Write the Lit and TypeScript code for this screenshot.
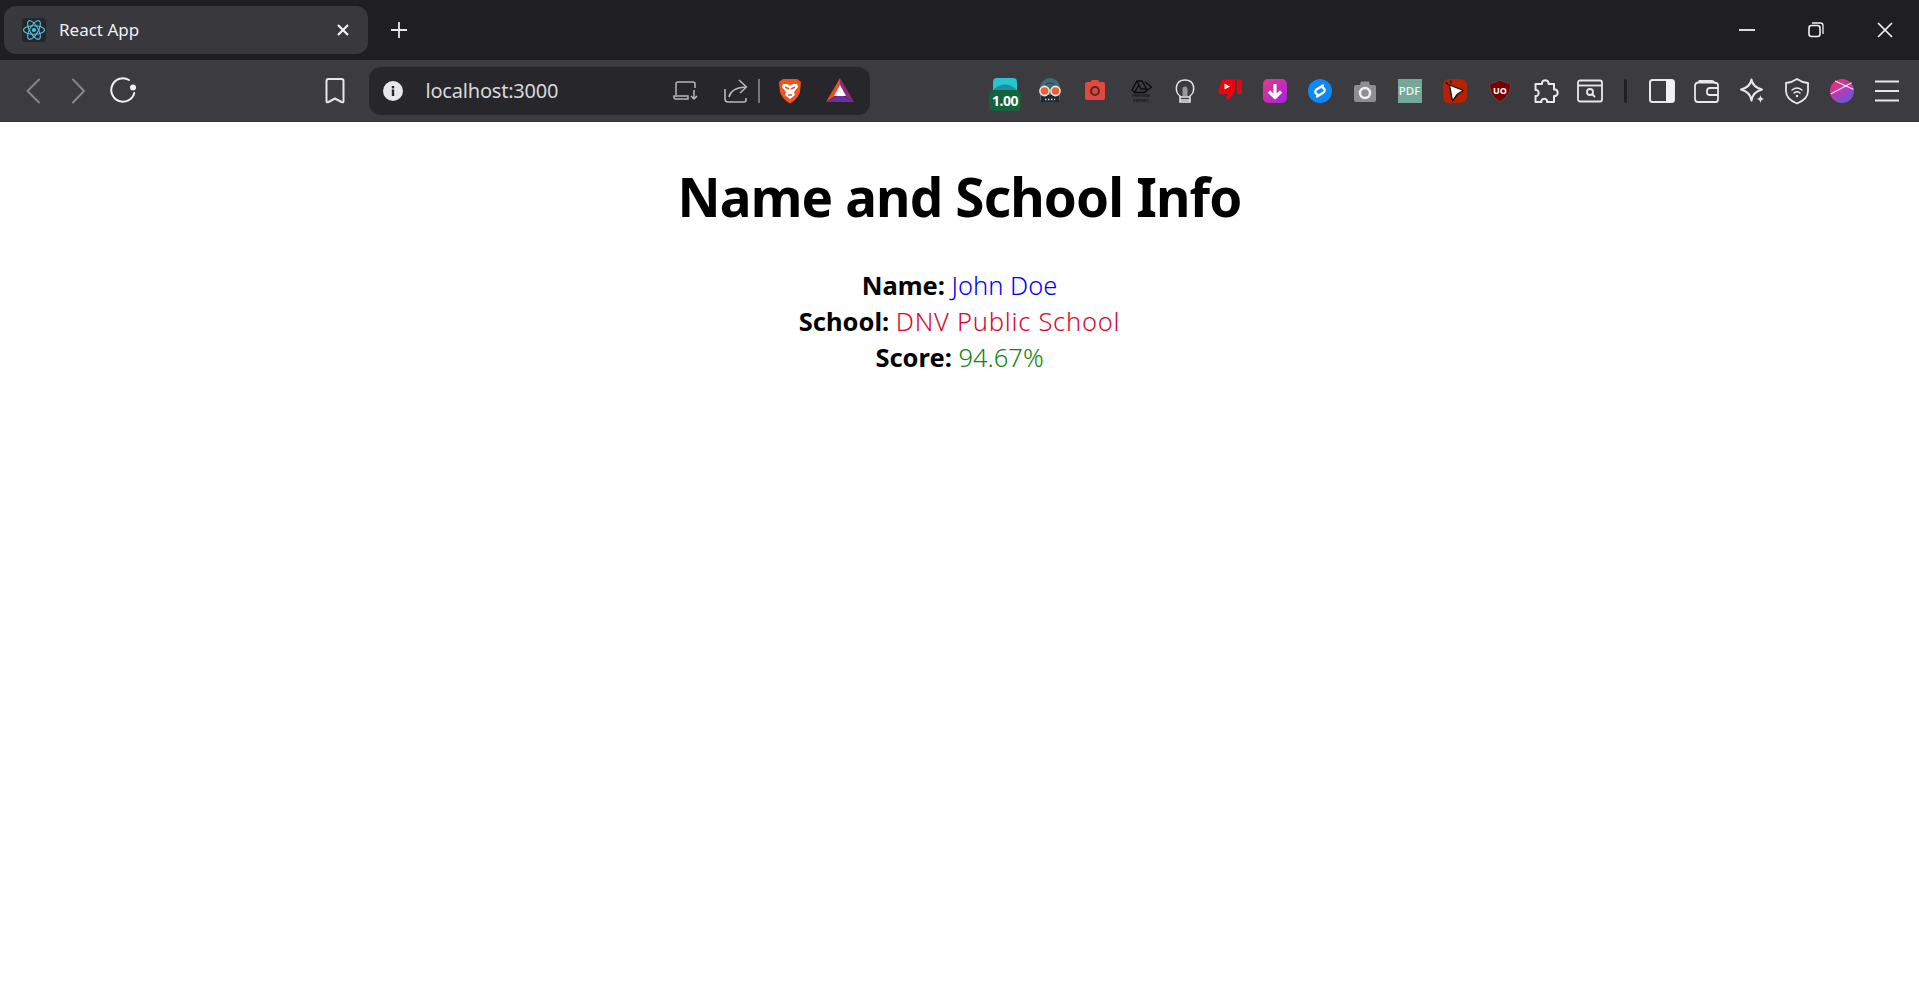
import { LitElement, html, css, svg } from 'lit';
import { customElement } from 'lit/decorators.js';

// toolbar icons, all drawn in a 30x30 box
const icon = (body: unknown) => html`<svg width="30" height="30" viewBox="0 0 30 30">${body}</svg>`;

const reactLogo = html`<svg class="favicon" width="24" height="24" viewBox="0 0 24 24">
  <rect width="24" height="24" rx="3" fill="#23272b"></rect>
  <g fill="none" stroke="#53c1de" stroke-width="1.1">
    <ellipse cx="12" cy="12" rx="10.5" ry="4.2"></ellipse>
    <ellipse cx="12" cy="12" rx="10.5" ry="4.2" transform="rotate(60 12 12)"></ellipse>
    <ellipse cx="12" cy="12" rx="10.5" ry="4.2" transform="rotate(120 12 12)"></ellipse>
  </g>
  <circle cx="12" cy="12" r="2.1" fill="#53c1de"></circle>
</svg>`;

const navIcons = [
  icon(svg`<path d="M21 3.500 L9.500 15 L21 26.500" fill="none" stroke="#85858a" stroke-width="2" stroke-linecap="round" stroke-linejoin="round"/>`),
  icon(svg`<path d="M10 3.500 L21 15 L10 26.500" fill="none" stroke="#85858a" stroke-width="2" stroke-linecap="round" stroke-linejoin="round"/>`),
  icon(svg`<path d="M21 4 A11.700 11.700 0 1 0 26.300 17" fill="none" stroke="#f2f2f4" stroke-width="2" stroke-linecap="round"/><circle cx="25" cy="11.500" r="3" fill="#f2f2f4"/>`),
];

const bookmark = icon(svg`<path d="M6.500 5 Q6.500 3 8.500 3 H21.500 Q23.500 3 23.500 5 V25 Q23.500 27 21.500 26 L15 22.500 L8.500 26 Q6.500 27 6.500 25 Z" fill="none" stroke="#e8e8ea" stroke-width="2" stroke-linejoin="round"/>`);

const extensions = [
  html`<svg width="34" height="34" viewBox="0 0 34 34" class="tall">
    <rect x="5" y="0" width="24" height="20" rx="4" fill="#2ac4cf"></rect>
    <path d="M6 11 Q17 2 28 11 V16 H6 Z" fill="#1b8fa8"></path>
    <rect x="1" y="12" width="32" height="21" rx="5" fill="#14633a"></rect>
    <text x="17" y="28" text-anchor="middle" class="badge-text">1.00</text>
  </svg>`,
  icon(svg`<path d="M5 24 V12 A10 10 0 0 1 25 12 V24 Z" fill="#3f6b78"/><path d="M9 9 Q15 4 21 9 L15 7.500 Z" fill="#1f3a44"/><rect x="6" y="19" width="18" height="7" fill="#1f2a33"/>
    <circle cx="9.500" cy="15" r="4.600" fill="#e8603c" stroke="#f2e4d6" stroke-width="1.600"/><circle cx="20.500" cy="15" r="4.600" fill="#e8603c" stroke="#f2e4d6" stroke-width="1.600"/><path d="M10 23.500 H20" stroke="#c8d2d6" stroke-width="1.400" stroke-dasharray="1.500 1.500"/>`),
  icon(svg`<path d="M7 6 H10.500 L12 4 H18 L19.500 6 H23 Q25 6 25 8 V22 Q25 24 23 24 H7 Q5 24 5 22 V8 Q5 6 7 6 Z" fill="#e2483d"/><circle cx="15" cy="15" r="4" fill="none" stroke="#5a2a2a" stroke-width="2.200"/>`),
  icon(svg`<path d="M7 14 L12 5 H17 L22 14 L19.500 16.500 H9.500 Z M12 5 L16 13 H22 M9.500 16.500 L13.500 9.500" fill="none" stroke="#0c0c0e" stroke-width="1.300"/><path d="M20 6 L26.500 11 L20 16" fill="none" stroke="#0c0c0e" stroke-width="1.300"/>
    <text x="16" y="21" text-anchor="middle" class="tiny-text">PREVIEW</text><text x="16" y="26" text-anchor="middle" class="tiny-text">EXPORT</text>`),
  icon(svg`<path d="M10 20 C4.500 16 4.500 4 15 4 C25.500 4 25.500 16 20 20 V26 H10 Z" fill="none" stroke="#e8e8ea" stroke-width="1.500"/><path d="M12.500 20 V13 A2.500 2.500 0 0 1 17.500 13 V20 Z" fill="#98989c"/><path d="M10 21 H20 M10 24 H20" stroke="#e8e8ea" stroke-width="1.500"/>`),
  icon(svg`<path d="M7 3.500 H20 V15 L14 23.500 L11 23 L12 18 H5 Q3 18 3.500 15 Z" fill="#f2000d"/><path d="M9.500 7.500 L15 10.500 L9.500 13.500 Z" fill="#fff"/><rect x="22" y="3.500" width="4.700" height="14.500" fill="#f2000d"/>`),
  html`<svg width="24" height="24" viewBox="0 0 24 24">
    <defs><linearGradient id="dl" x1="0" y1="0" x2="1" y2="1"><stop offset="0" stop-color="#e23a8c"></stop><stop offset="1" stop-color="#a522e0"></stop></linearGradient></defs>
    <rect width="24" height="24" rx="5" fill="url(#dl)"></rect>
    <path d="M12 5 V18 M6 12.500 L12 18.500 L18 12.500" fill="none" stroke="#fff" stroke-width="3.200" stroke-linejoin="round"></path>
  </svg>`,
  html`<svg width="24" height="24" viewBox="0 0 24 24">
    <circle cx="12" cy="12" r="12" fill="#0d88f5"></circle>
    <path d="M15 6.500 L8.500 10.500 Q6 13 8.500 15 L10.500 16 M9 17.500 L15.500 13.500 Q18 11 15.500 9 L13.500 8" fill="none" stroke="#fff" stroke-width="2.300" stroke-linecap="round"></path>
  </svg>`,
  icon(svg`<path d="M4 11 Q4 9 6 9 H10 L11 5.500 H19 L20 9 H24 Q26 9 26 11 V24 Q26 26 24 26 H6 Q4 26 4 24 Z" fill="#8f8f93"/><circle cx="15" cy="17" r="5" fill="#8f8f93" stroke="#f0f0f2" stroke-width="2.500"/>`),
  html`<div class="pdf">PDF</div>`,
  html`<svg width="24" height="24" viewBox="0 0 24 24">
    <rect width="24" height="24" rx="6" fill="#b92200"></rect>
    <path d="M6.500 6 L20.500 11.500 L14.500 15 L9.500 22 Z" fill="#fff" stroke="#111" stroke-width="1.300" stroke-linejoin="round"></path>
    <path d="M3 3 L5.500 6 M7.500 1.500 L8 4.500" stroke="#111" stroke-width="1.300"></path>
  </svg>`,
  html`<svg width="24" height="24" viewBox="0 0 24 24">
    <path d="M12 1 Q17 4 22.500 4.500 Q23 16 12 23 Q1 16 1.500 4.500 Q7 4 12 1 Z" fill="#7a0000" stroke="#55555a" stroke-width="0.800"></path>
    <text x="12" y="15" text-anchor="middle" class="ubo-text">UO</text>
  </svg>`,
  icon(svg`<path d="M12 6.500 A3.500 3.500 0 0 1 18.500 6.500 V8 H24 V13.500 H25.500 A3.500 3.500 0 0 1 25.500 20 H24 V26 H17 V24.500 A3 3 0 0 0 11.500 24.500 V26 H5.500 V20 H7 A3.500 3.500 0 0 0 7 14 H5.500 V8 H12 Z" fill="none" stroke="#e8e8ea" stroke-width="2" stroke-linejoin="round"/>`),
  icon(svg`<rect x="3" y="4.500" width="24" height="21" rx="2" fill="none" stroke="#e8e8ea" stroke-width="1.800"/><path d="M3 9.500 H27" stroke="#e8e8ea" stroke-width="1.800"/><circle cx="15" cy="16" r="3" fill="none" stroke="#e8e8ea" stroke-width="1.800"/><path d="M17.500 18.500 L20 21" stroke="#e8e8ea" stroke-width="1.800"/>`),
];

const rightIcons = [
  html`<svg width="26" height="24" viewBox="0 0 26 24">
    <rect x="1" y="1" width="24" height="22" rx="2.500" fill="none" stroke="#e8e8ea" stroke-width="2"></rect>
    <path d="M17 1 H22.500 Q25 1 25 3.500 V20.500 Q25 23 22.500 23 H17 Z" fill="#f2f2f4"></path>
  </svg>`,
  icon(svg`<path d="M6.500 5 H20 Q22 5 22.500 7 M3 10 Q3 7 6 6.500 H21 Q26 6.500 26 9 V23 Q26 26 24 26 H6 Q3 26 3 23 Z M26 12 H18 Q15 12 15 15 V16.500 Q15 19 18 19 H26" fill="none" stroke="#e8e8ea" stroke-width="1.800" stroke-linejoin="round"/>`),
  icon(svg`<path d="M14.500 3.500 C15.500 9 19 12 25 13.500 C19 15 15.500 18 14.500 24.500 C13.500 18 10 15 4 13.500 C10 12 13.500 9 14.500 3.500 Z" fill="none" stroke="#e8e8ea" stroke-width="2" stroke-linejoin="round"/><path d="M23.500 18.500 C23.800 21.500 24.500 22.300 27.500 23 C24.500 23.700 23.800 24.500 23.500 27.500 C23.200 24.500 22.500 23.700 19.500 23 C22.500 22.300 23.200 21.500 23.500 18.500 Z" fill="#e8e8ea"/>`),
  icon(svg`<path d="M15 3 Q20 6.500 26 7 V15 Q26 23 15 27.500 Q4 23 4 15 V7 Q10 6.500 15 3 Z" fill="none" stroke="#e8e8ea" stroke-width="1.800" stroke-linejoin="round"/><path d="M10 14 Q15 10 20 14 M12 17 Q15 14.500 18 17" fill="none" stroke="#e8e8ea" stroke-width="1.500" stroke-linecap="round"/><circle cx="15" cy="20" r="1.200" fill="#e8e8ea"/>`),
  html`<svg width="24" height="24" viewBox="0 0 24 24">
    <defs><linearGradient id="av" x1="0.2" y1="0" x2="0.8" y2="1"><stop offset="0" stop-color="#ee2f6c"></stop><stop offset="0.5" stop-color="#b53bb5"></stop><stop offset="1" stop-color="#5a5ce0"></stop></linearGradient></defs>
    <circle cx="12" cy="12" r="12" fill="url(#av)"></circle>
    <path d="M0.700 15 L21.700 3.700 M5 2 L23.300 10.300" stroke="#f4e6ee" stroke-width="1.100"></path>
  </svg>`,
  html`<svg width="26" height="22" viewBox="0 0 26 22"><path d="M1 1.500 H25 M1 11 H25 M1 20.500 H25" stroke="#e8e8ea" stroke-width="2"></path></svg>`,
];

@customElement('app-root')
export class AppRoot extends LitElement {
  static styles = css`
    :host {
      display: block;
      min-height: 1003px;
      background: #fff;
      font-family: 'Noto Sans', 'Open Sans', sans-serif;
    }

    .tabstrip {
      height: 60px;
      background: #1f1f23;
      display: flex;
      align-items: center;
      padding-left: 4px;
      box-sizing: border-box;
    }

    .tab {
      width: 364px;
      height: 48px;
      border-radius: 12px;
      background: #38383d;
      display: flex;
      align-items: center;
      padding: 0 18px 0 18px;
      box-sizing: border-box;
      color: #f2f2f4;
      font-size: 17px;
    }

    .favicon { margin-right: 13px; }

    .tab-title { flex: 1; padding-bottom: 2px; }

    .new-tab { margin-left: 23px; display: flex; }

    .window-controls {
      margin-left: auto;
      margin-bottom: 1px;
      display: flex;
      align-items: center;
      gap: 53px;
      padding-right: 26px;
    }

    .toolbar {
      height: 62px;
      background: #3b3b40;
      border-bottom: 1px solid #333338;
      box-sizing: border-box;
      display: flex;
      align-items: center;
      justify-content: space-between;
      padding: 0 10px;
    }

    .left { display: flex; align-items: center; }

    .btn {
      width: 45px;
      height: 44px;
      display: flex;
      align-items: center;
      justify-content: center;
      flex: none;
    }

    .nav-gap { width: 167.500px; }

    .urlbar {
      width: 501px;
      height: 48px;
      margin-left: 11px;
      border-radius: 12px;
      background: #27272b;
      display: flex;
      align-items: center;
      box-sizing: border-box;
      padding: 0 6px 0 14px;
      color: #d8d8da;
      font-size: 20px;
    }

    .url { margin-left: 23px; flex: 1; letter-spacing: -0.200px; }

    .url-icon { width: 50px; display: flex; justify-content: center; }

    .url-icon.wide { width: 52px; }

    .url-icon.last { width: 48px; }

    .url-sep { width: 2px; height: 24px; background: #77777b; margin: 0 4px 0 -3px; }

    .right { display: flex; align-items: center; }

    .sep-dark { width: 3px; height: 24px; background: #1f1f23; border-radius: 2px; margin: 0 12px; flex: none; }

    .tall { margin-top: 9px; }

    .badge-text { font: 700 14px 'Noto Sans', sans-serif; fill: #fff; letter-spacing: -0.500px; }

    .ubo-text { font: 700 9px 'Noto Sans', sans-serif; fill: #fff; }

    .tiny-text { font: 700 4px 'Noto Sans', sans-serif; fill: #17171a; }

    .pdf {
      width: 24px;
      height: 24px;
      background: #74a99a;
      color: #f3f7f5;
      font-size: 11.500px;
      font-weight: 500;
      line-height: 24px;
      text-align: center;
    }

    main {
      text-align: center;
      color: #000;
    }

    h1 {
      margin: 0;
      padding-top: 38px;
      font-size: 53px;
      line-height: 74px;
      font-weight: 700;
      letter-spacing: -0.850px;
    }

    .rows {
      margin-top: 33px;
      font-size: 25.500px;
      line-height: 36px;
    }

    .rows b { font-weight: 700; }

    .rows span { font-weight: 300; }

    .blue { color: #0000ff; }
    .red { color: #d80a32; letter-spacing: 0.750px; }
    .green { color: #118511; }
  `;

  render() {
    return html`
      <div class="tabstrip">
        <div class="tab">
          ${reactLogo}
          <span class="tab-title">React App</span>
          <svg width="14" height="14" viewBox="0 0 14 14"><path d="M2 2 L12 12 M12 2 L2 12" stroke="#f2f2f4" stroke-width="2.200"></path></svg>
        </div>
        <div class="new-tab">
          <svg width="16" height="16" viewBox="0 0 16 16"><path d="M8 0 V16 M0 8 H16" stroke="#e8e8ea" stroke-width="1.800"></path></svg>
        </div>
        <div class="window-controls">
          <svg width="16" height="16" viewBox="0 0 16 16"><path d="M0 8 H16" stroke="#f2f2f4" stroke-width="1.800"></path></svg>
          <svg width="16" height="16" viewBox="0 0 16 16"><rect x="1" y="3.500" width="11" height="11" rx="2.500" fill="none" stroke="#f2f2f4" stroke-width="1.600"></rect><path d="M4 1 H12.500 Q15 1 15 3.500 V12" fill="none" stroke="#f2f2f4" stroke-width="1.300"></path></svg>
          <svg width="16" height="16" viewBox="0 0 16 16"><path d="M1 1 L15 15 M15 1 L1 15" stroke="#f2f2f4" stroke-width="1.700"></path></svg>
        </div>
      </div>

      <div class="toolbar">
        <div class="left">
          ${navIcons.map((i) => html`<div class="btn">${i}</div>`)}
          <div class="nav-gap"></div>
          <div class="btn">${bookmark}</div>
          <div class="urlbar">
            <svg width="20" height="20" viewBox="0 0 20 20">
              <circle cx="10" cy="10" r="10" fill="#e8e8ea"></circle>
              <rect x="8.800" y="8.500" width="2.400" height="6.500" fill="#27272b"></rect>
              <rect x="8.800" y="5" width="2.400" height="2.400" fill="#27272b"></rect>
            </svg>
            <span class="url">localhost:3000</span>
            <div class="url-icon">
              <svg width="26" height="20" viewBox="0 0 26 20" fill="none" stroke="#b8b8bb" stroke-width="1.500">
                <path d="M3 14 V3 Q3 1 5 1 H20 Q22 1 22 3 V7 M1 15 H15 V18 H3 Q1 18 1 16 Z"></path>
                <path d="M21 9 V18 M18 15 L21 18 L24 15"></path>
              </svg>
            </div>
            <div class="url-icon">
              <svg width="24" height="24" viewBox="0 0 24 24" fill="none" stroke="#b8b8bb" stroke-width="1.600" stroke-linejoin="round">
                <path d="M1 10 V20 Q1 23 4 23 H20 Q22 23 22 21 V19"></path>
                <path d="M5 18 Q7 9 21 8 M15 1 L22.500 8 L16 14"></path>
              </svg>
            </div>
            <div class="url-sep"></div>
            <div class="url-icon wide">
              <svg width="24" height="26" viewBox="0 0 24 26">
                <path d="M5 1 H19 L23 4 L22 14 Q20 21 12 25.500 Q4 21 2 14 L1 4 Z" fill="#f1551f"></path>
                <path d="M5 6 H9 L12 7.500 L15 6 H19 L20 9 L16 14 L17 17 L12 21 L7 17 L8 14 L4 9 Z" fill="#fff"></path>
                <path d="M7 9 L11 11 M17 9 L13 11 M10 17 H14" stroke="#f1551f" stroke-width="1.500"></path>
              </svg>
            </div>
            <div class="url-icon last">
              <svg width="28" height="25" viewBox="0 0 28 25">
                <path d="M14 0 L28 24 L14 15 Z" fill="#8d2a79"></path>
                <path d="M14 0 L0 24 L14 15 Z" fill="#f04b23"></path>
                <path d="M0 24 H28 L14 16 Z" fill="#6b2f9e"></path>
                <path d="M14 7 L20 18 H8 Z" fill="#fff"></path>
              </svg>
            </div>
          </div>
        </div>
        <div class="right">
          ${extensions.map((i) => html`<div class="btn">${i}</div>`)}
          <div class="sep-dark"></div>
          ${rightIcons.map((i) => html`<div class="btn">${i}</div>`)}
        </div>
      </div>

      <main>
        <h1>Name and School Info</h1>
        <div class="rows">
          <div><b>Name:</b> <span class="blue">John Doe</span></div>
          <div><b>School:</b> <span class="red">DNV Public School</span></div>
          <div><b>Score:</b> <span class="green">94.67%</span></div>
        </div>
      </main>
    `;
  }
}
